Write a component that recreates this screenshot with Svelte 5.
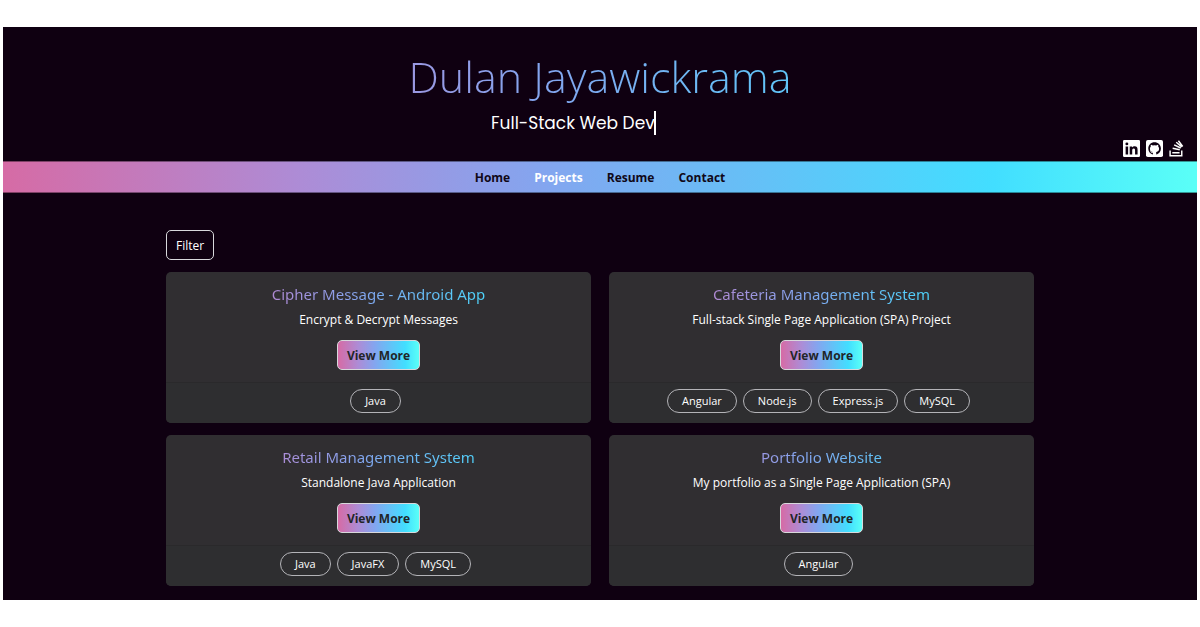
<script>
  const pages = ['Home', 'Projects', 'Resume', 'Contact'];
  const current = 'Projects';

  const projects = [
    { title: 'Cipher Message - Android App', summary: 'Encrypt & Decrypt Messages', tags: ['Java'] },
    {
      title: 'Cafeteria Management System',
      summary: 'Full-stack Single Page Application (SPA) Project',
      tags: ['Angular', 'Node.js', 'Express.js', 'MySQL']
    },
    { title: 'Retail Management System', summary: 'Standalone Java Application', tags: ['Java', 'JavaFX', 'MySQL'] },
    { title: 'Portfolio Website', summary: 'My portfolio as a Single Page Application (SPA)', tags: ['Angular'] }
  ];
</script>

<div class="page">
  <header>
    <h1>Dulan Jayawickrama</h1>
    <div class="tagline"><p>Full-Stack Web Dev</p></div>
    <div class="social">
      <a href="#linkedin" aria-label="LinkedIn">
        <svg class="square" viewBox="0 0 448 448" aria-hidden="true">
          <path fill="currentColor" fill-rule="evenodd" d="M32 0h384a32 32 0 0 1 32 32v384a32 32 0 0 1-32 32H32a32 32 0 0 1-32-32V32A32 32 0 0 1 32 0zM69 170v214h66V170zM102 64a38 38 0 1 0 0 77 38 38 0 0 0 0-77zM177 170v214h66V278c0-28 5-55 40-55s35 32 35 57v104h66V267c0-58-12-102-80-102-32 0-54 18-63 34h-1v-29z" />
        </svg>
      </a>
      <a href="#github" aria-label="GitHub">
        <svg class="square" viewBox="0 0 448 448" aria-hidden="true">
          <rect width="448" height="448" rx="48" fill="currentColor" />
          <path fill="#0f0011" d="M224 60C130 60 60 131 60 222c0 73 46 135 111 157 8 2 11-4 11-8v-38c-46 10-55-20-55-20-8-19-18-24-18-24-15-10 1-10 1-10 16 1 25 17 25 17 15 25 38 18 47 14l10-23 66 0 8 24c4 14 4 60 4 60 0 5 3 10 12 8 65-22 111-84 111-157 0-91-76-162-169-162z" />
          <path fill="currentColor" d="M174 318c-42-9-71-35-71-91 0-25 9-43 23-57-3-14-3-30 2-44 20 0 37 10 51 20a195 195 0 0 1 90 0c14-10 31-20 51-20 5 14 5 30 2 44 14 14 23 32 23 57 0 56-29 82-71 91z" />
        </svg>
      </a>
      <a href="#stack-overflow" aria-label="Stack Overflow">
        <svg class="stack" viewBox="0 0 384 448" aria-hidden="true">
          <path fill="currentColor" d="M291 279 96 238l8-40 195 42zM338 196 185 69l26-31 152 127zM314 228l-181-84 17-37 181 84zM241 22l33-24 118 160-33 24zM289 360H90v-40h199zM330 400V280h40v160H10V280h40v120z" />
        </svg>
      </a>
    </div>
  </header>

  <nav>
    {#each pages as page}
      <a href="#{page.toLowerCase()}" class:active={page === current} aria-current={page === current ? 'page' : undefined}>{page}</a>
    {/each}
  </nav>

  <main>
    <button class="filter" type="button">Filter</button>
    <div class="cards">
      {#each projects as project}
        <article>
          <div class="body">
            <h2>{project.title}</h2>
            <p>{project.summary}</p>
            <button class="more" type="button">View More</button>
          </div>
          <ul>
            {#each project.tags as tag}
              <li>{tag}</li>
            {/each}
          </ul>
        </article>
      {/each}
    </div>
  </main>
</div>

<style>
  :global(body) {
    background: #fff;
  }

  .page {
    --rainbow: linear-gradient(to right, #d66ba5, #ad8cd6 25%, #84a5ef 45%, #42deff 83%, #5afff7);
    margin: 27px 3px;
    background: #0f0011;
    color: #fff;
    font-family: 'Open Sans', 'Noto Sans', sans-serif;
    font-size: 12px;
  }

  h1, h2, p, ul {
    margin: 0;
    padding: 0;
  }

  header {
    display: flex;
    flex-direction: column;
    align-items: center;
    padding-top: 20px;
  }

  h1 {
    align-self: stretch;
    background: var(--rainbow);
    background-clip: text;
    color: transparent;
    font-size: 43px;
    font-weight: 350;
    line-height: 60px;
    text-align: center;
  }

  .tagline {
    width: 218px;
    padding-top: 4px;
  }

  .tagline p {
    box-sizing: border-box;
    width: 165px;
    overflow: hidden;
    border-right: 2px solid #fff;
    font-family: Poppins, Inter, sans-serif;
    font-size: 17px;
    line-height: 24px;
    white-space: nowrap;
  }

  .social {
    display: flex;
    align-self: flex-end;
    align-items: center;
    gap: 6px;
    height: 26px;
    padding-right: 14px;
  }

  .social a {
    display: flex;
    color: #fff;
  }

  .square {
    width: 17px;
    height: 17px;
  }

  .stack {
    width: 14px;
    height: 17px;
    overflow: visible;
  }

  nav {
    display: flex;
    justify-content: center;
    gap: 24px;
    padding-top: 2px;
    background: var(--rainbow);
    border-block: 1px solid #0006;
  }

  nav a {
    color: #100818;
    font-weight: 700;
    line-height: 28px;
    text-decoration: none;
  }

  nav a.active {
    color: #fff;
  }

  main {
    max-width: 868px;
    margin: 0 auto;
    padding: 37px 12px 14px;
  }

  button {
    box-sizing: border-box;
    height: 30px;
    border: 1px solid #d8d8dc;
    border-radius: 5px;
    font: inherit;
  }

  .filter {
    display: block;
    padding: 0 9px;
    background: transparent;
    color: #fff;
  }

  .cards {
    display: grid;
    grid-template-columns: repeat(auto-fit, minmax(340px, 1fr));
    gap: 12px 18px;
    margin-top: 12px;
  }

  article {
    overflow: hidden;
    border-radius: 5px;
    background: #302e31;
  }

  .body {
    display: flex;
    flex-direction: column;
    align-items: center;
    padding: 10px 12px 12px;
  }

  h2 {
    align-self: stretch;
    background: var(--rainbow);
    background-clip: text;
    color: transparent;
    font-family: 'Noto Sans', 'Open Sans', sans-serif;
    font-size: 15px;
    font-weight: 400;
    line-height: 24px;
    text-align: center;
  }

  .body p {
    margin-bottom: 6px;
    line-height: 28px;
  }

  .more {
    padding: 0 9px;
    background: var(--rainbow);
    color: #212529;
    font-weight: 700;
  }

  ul {
    display: flex;
    justify-content: center;
    gap: 6px;
    padding: 6px 12px 10px 6px;
    border-top: 1px solid #2a292b;
    background: #2e2e30;
    list-style: none;
  }

  li {
    padding: 0 14px;
    border: 1px solid #b4b4b8;
    border-radius: 12px;
    font-size: 11px;
    line-height: 22px;
  }
</style>
